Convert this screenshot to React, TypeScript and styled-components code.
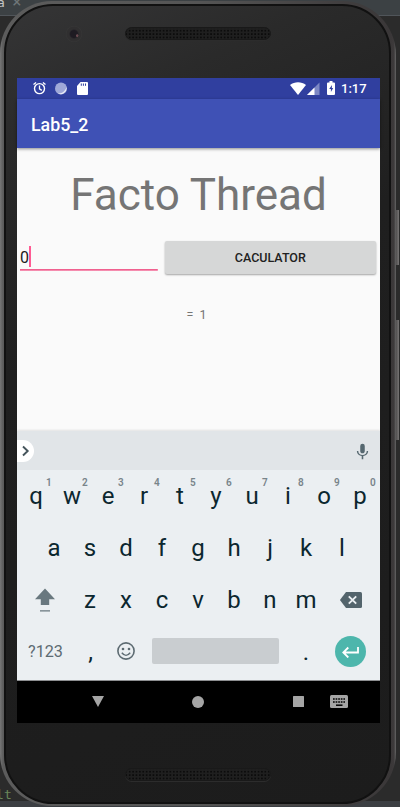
import React from "react";
import styled, { createGlobalStyle } from "styled-components";

const GlobalStyle = createGlobalStyle`
  * { box-sizing: border-box; }
  body { margin: 0; background: #2b2b2b; font-family: Roboto, "Liberation Sans", sans-serif; }
  svg { display: block; flex: none; }
`;

const Desktop = styled.main`
  position: relative;
  width: 400px;
  height: 807px;
  overflow: hidden;
  background: linear-gradient(#3c4144 0 15px, #50555a 15px 16px, #2b2b2b 16px 801px, #3c3f43 801px);
`;

const EditorText = styled.span<{ $x: number; $y: number; $color: string; $size: number }>`
  position: absolute;
  left: ${(p) => p.$x}px;
  top: ${(p) => p.$y}px;
  color: ${(p) => p.$color};
  font: ${(p) => p.$size}px/14px "DejaVu Sans Mono", monospace;
`;

const SideButton = styled.i<{ $y: number; $h: number }>`
  position: absolute;
  left: 396px;
  top: ${(p) => p.$y}px;
  width: 3px;
  height: ${(p) => p.$h}px;
  background: linear-gradient(90deg, #504e4e, #777575);
`;

const Shell = styled.section`
  position: relative;
  width: 396px;
  height: 805px;
  margin-top: 1px;
  padding: 3px 5px 2px 4px;
  border-radius: 52px 54px 54px 52px;
  background: linear-gradient(90deg, #777 0, #5c5c5c 3px, #555 50%, #3a3738 391px, #3d3a3b 394px, #666 396px);
`;

const Face = styled.div`
  display: flex;
  flex-direction: column;
  height: 800px;
  border: 2px solid #111;
  border-radius: 49px;
  background: linear-gradient(155deg, #353536 0, #2a2a2a 15%, #1f1f1f 38%, #1c1c1c 100%);
`;

const Bezel = styled.div<{ $h: number }>`
  position: relative;
  flex: none;
  height: ${(p) => p.$h}px;
`;

const Camera = styled.i`
  position: absolute;
  left: 60px;
  top: 20px;
  width: 16px;
  height: 16px;
  border-radius: 50%;
  background: radial-gradient(circle at 70% 60%, #6a4a50 0 1px, transparent 1.5px),
    radial-gradient(circle, #1e1b22 0 3.5px, #302f30 5px 7px, #383838 8px);
`;

const Speaker = styled.i<{ $top: number }>`
  position: absolute;
  left: 119px;
  top: ${(p) => p.$top}px;
  width: 146px;
  height: 13px;
  border-radius: 7px;
  border: 1px solid #191919;
  background: radial-gradient(circle, #0c0c0c 0 0.6px, transparent 1.2px) 2px 1px / 3.4px 3.4px, #1f1f1f;
  box-shadow: 0 1px 0 #2c2c2c;
`;

const Screen = styled.div`
  flex: none;
  width: 363px;
  height: 645px;
  margin-left: 11px;
  background: #fafafa;
`;

const StatusBar = styled.header`
  display: flex;
  align-items: center;
  height: 21px;
  padding: 0 14px 1px 16px;
  color: #fff;
  background: #303f9f;
`;

const Time = styled.span`
  width: 25px;
  margin-left: 6px;
  padding-top: 2px;
  font-size: 13px;
  line-height: 20px;
  font-weight: 500;
`;

const Push = styled.span`
  flex: 1;
`;

const Gap = styled.span<{ $w: number }>`
  flex: none;
  width: ${(p) => p.$w}px;
`;

const AppBar = styled.h1`
  position: relative;
  height: 49px;
  margin: 0;
  padding-left: 14px;
  color: #fff;
  font-size: 17.8px;
  line-height: 51px;
  font-weight: 500;
  background: #3f51b5;
  box-shadow: 0 1px 3px rgba(0, 0, 0, 0.45);
`;

const Content = styled.div`
  height: 283px;
  overflow: hidden;
`;

const Title = styled.h2`
  margin: 19px 0 0;
  color: #757575;
  font-size: 44px;
  line-height: 56px;
  font-weight: 400;
  text-align: center;
  white-space: nowrap;
`;

const Form = styled.div`
  display: flex;
  margin-top: 18px;
  padding: 0 4px 0 3px;
`;

const Field = styled.div`
  display: flex;
  width: 138px;
  height: 30px;
  padding-top: 5px;
  background: linear-gradient(#ee4a7f, #f7a3be) bottom / 100% 2px no-repeat;
  color: #212121;
  font-size: 16px;
  line-height: 23px;
`;

const Caret = styled.i`
  width: 2px;
  height: 21px;
  margin-left: -0.5px;
  background: #ff5b93;
`;

const CalcButton = styled.button`
  width: 212px;
  height: 33px;
  margin-left: 7px;
  padding: 1px 0 0;
  border: 0;
  border-radius: 2px;
  background: #d6d7d7;
  box-shadow: 0 1px 2px rgba(0, 0, 0, 0.35);
  color: #212121;
  font: 500 12.5px/32px Roboto, sans-serif;
`;

const Result = styled.p`
  margin: 33px 0 0;
  padding-right: 4px;
  color: #757575;
  font-size: 12.5px;
  line-height: 15px;
  text-align: center;
  word-spacing: 3px;
`;

const Suggestions = styled.div`
  display: flex;
  align-items: center;
  justify-content: space-between;
  height: 39px;
  padding: 1px 9px 0 0;
  background: #e1e5e8;
  box-shadow: 0 -1px 2px rgba(0, 0, 0, 0.1);
`;

const Expand = styled.span`
  display: flex;
  align-items: center;
  width: 17px;
  height: 22px;
  padding-left: 4px;
  border-radius: 0 11px 11px 0;
  background: #fff;
`;

const Keyboard = styled.div`
  height: 211px;
  background: #ebeff2;
  border-bottom: 1px solid #8c8e90;
`;

const KeyRow = styled.div<{ $indent: number }>`
  display: flex;
  height: 52px;
  padding-left: ${(p) => p.$indent}px;
`;

const Key = styled.span<{ $w?: number }>`
  position: relative;
  display: flex;
  justify-content: center;
  flex: none;
  width: ${(p) => p.$w ?? 36}px;
  color: #0b272f;
  font-size: 24px;
  line-height: 53px;
`;

const Hint = styled.sup`
  position: absolute;
  left: 28px;
  top: 7px;
  color: #78848a;
  font-size: 10px;
  line-height: 12px;
  font-weight: 600;
`;

const IconKey = styled(Key)`
  align-items: center;
`;

const EmojiKey = styled(IconKey)`
  padding-bottom: 2px;
`;

const ModeKey = styled(Key)`
  padding-left: 1px;
  color: #5d6b72;
  font-size: 16.2px;
  line-height: 52px;
`;

const PunctuationKey = styled(Key)`
  padding-left: 1px;
`;

const SpaceBar = styled.span`
  width: 127px;
  height: 26px;
  margin: 12px 8px 0 8.4px;
  border-radius: 2px;
  background: #c9cdd0;
`;

const Enter = styled.span`
  display: flex;
  align-items: center;
  justify-content: center;
  width: 31px;
  height: 31px;
  margin: 10px 0 0 11.6px;
  border-radius: 50%;
  background: #4db6ac;
`;

const NavBar = styled.nav`
  display: flex;
  align-items: center;
  height: 42px;
  padding-bottom: 1px;
  background: #000;
`;

const NavItem = styled.span<{ $w: number }>`
  display: flex;
  align-items: center;
  justify-content: center;
  flex: none;
  width: ${(p) => p.$w}px;
`;

const hints = "1234567890";

const letters = (row: string, numbered = false) =>
  row.split("").map((c, i) => (
    <Key key={c}>
      {c}
      {numbered && <Hint>{hints[i]}</Hint>}
    </Key>
  ));

const AlarmIcon = () => (
  <svg width="14" height="14" viewBox="0 0 14 14" fill="none" stroke="#fff">
    <circle cx="6.5" cy="7.6" r="5" strokeWidth="1.4" />
    <path d="M6.500 4.500v3.400l2.300 1.500M.5 3.600l2.600-2.200M12.500 3.600L9.900 1.400" strokeWidth="1.300" />
  </svg>
);

const SyncIcon = () => (
  <svg width="13" height="13" viewBox="0 0 13 13">
    <circle cx="6" cy="6.5" r="6" fill="#9fa8d8" />
    <path d="M11.500 5a6 6 0 0 1-9 6.300c4.200.6 7.600-1.700 9-6.300z" fill="#e8eaf6" />
  </svg>
);

const SdIcon = () => (
  <svg width="11" height="13" viewBox="0 0 11 13">
    <path d="M3.500 0H10a1 1 0 0 1 1 1v11a1 1 0 0 1-1 1H1a1 1 0 0 1-1-1V4z" fill="#fff" />
    <path d="M4.300 1.500v2.300M6.400 1.500v2.300M8.500 1.500v2.300" stroke="#303f9f" strokeWidth="1" />
  </svg>
);

const WifiIcon = () => (
  <svg width="16" height="13" viewBox="0 0 16 13">
    <path d="M0 3C4.500-.6 11.500-.6 16 3L8 13z" fill="#fff" />
  </svg>
);

const SignalIcon = () => (
  <svg width="13" height="13" viewBox="0 0 13 13">
    <path d="M0 13L12.500 .5v12.500z" fill="#7c87c4" />
    <path d="M0 13L7.500 5.500v7.500z" fill="#fff" />
  </svg>
);

const BatteryIcon = () => (
  <svg width="8" height="14" viewBox="0 0 8 14">
    <path d="M2.500 0h3v1.500H7a1 1 0 0 1 1 1V13a1 1 0 0 1-1 1H1a1 1 0 0 1-1-1V2.500a1 1 0 0 1 1-1h1.500z" fill="#fff" />
    <path d="M5 4L2.200 8h1.700v3L6.200 7H4.800z" fill="#303f9f" />
  </svg>
);

const MicIcon = () => (
  <svg width="17" height="17" viewBox="0 0 24 24" fill="#566870">
    <path d="M12 14.500c1.900 0 3.200-1.400 3.200-3.300V4.300a3.200 3.200 0 0 0-6.400 0v6.900c0 1.900 1.300 3.300 3.200 3.300z" />
    <path d="M18 11.200c0 3.400-2.900 5.600-6 5.600s-6-2.200-6-5.600H4c0 3.900 3.200 6.700 6.900 7.300V23h2.200v-4.500c3.700-.6 6.900-3.400 6.900-7.300z" />
  </svg>
);

const ShiftIcon = () => (
  <svg width="20" height="24" viewBox="0 0 20 24" fill="#69787f">
    <path d="M10 .5l10 10.700h-5.800V17H5.800v-5.800H0zM5 22.200h10v1.400H5z" />
  </svg>
);

const BackspaceIcon = () => (
  <svg width="22" height="16" viewBox="0 0 22 16">
    <path d="M6 0h14.500A1.500 1.500 0 0 1 22 1.500v13a1.500 1.500 0 0 1-1.500 1.500H6L.3 8.600a1 1 0 0 1 0-1.200z" fill="#53646c" />
    <path d="M8.800 4.300l7.400 7.400M16.200 4.300l-7.400 7.400" stroke="#ebeff2" strokeWidth="1.900" />
  </svg>
);

const SmileIcon = () => (
  <svg width="18" height="18" viewBox="0 0 18 18">
    <circle cx="9" cy="9" r="8.100" fill="none" stroke="#5d6b72" strokeWidth="1.600" />
    <circle cx="6" cy="7" r="1.300" fill="#5d6b72" />
    <circle cx="12" cy="7" r="1.300" fill="#5d6b72" />
    <path d="M4.800 10.700q4.200 5.300 8.400 0" fill="none" stroke="#5d6b72" strokeWidth="1.400" />
  </svg>
);

const EnterIcon = () => (
  <svg width="17" height="12" viewBox="0 0 17 12" fill="none" stroke="#fff" strokeWidth="1.800">
    <path d="M16 1v5.500H1.500M6.300 1.500l-5 5 5 5" />
  </svg>
);

const KeyboardIcon = () => (
  <svg width="18" height="13" viewBox="0 0 18 13">
    <rect width="18" height="13" rx="1.500" fill="#a5a5a5" />
    <path d="M3 4h12M3 7h12" stroke="#000" strokeWidth="1.700" strokeDasharray="1.700 .9" />
    <path d="M6 10.200h6.500" stroke="#000" strokeWidth="1.500" />
  </svg>
);

export default function App() {
  return (
    <>
      <GlobalStyle />
      <Desktop>
        <EditorText $x={-3} $y={-4} $color="#c4c4c4" $size={13}>a</EditorText>
        <EditorText $x={12} $y={-5} $color="#6f7678" $size={16}>×</EditorText>
        <EditorText $x={-4} $y={788} $color="#6a8759" $size={13}>l</EditorText>
        <EditorText $x={4} $y={788} $color="#6a8759" $size={13}>t</EditorText>
        <SideButton $y={210} $h={55} />
        <SideButton $y={320} $h={120} />
        <Shell>
          <Face>
            <Bezel $h={72}>
              <Camera />
              <Speaker $top={21} />
            </Bezel>
            <Screen>
              <StatusBar>
                <AlarmIcon />
                <Gap $w={8} />
                <SyncIcon />
                <Gap $w={9} />
                <SdIcon />
                <Push />
                <WifiIcon />
                <Gap $w={1} />
                <SignalIcon />
                <Gap $w={7} />
                <BatteryIcon />
                <Time>1:17</Time>
              </StatusBar>
              <AppBar>Lab5_2</AppBar>
              <Content>
                <Title>Facto Thread</Title>
                <Form>
                  <Field>
                    0<Caret />
                  </Field>
                  <CalcButton>CACULATOR</CalcButton>
                </Form>
                <Result>= 1</Result>
              </Content>
              <Suggestions>
                <Expand>
                  <svg width="9" height="12" viewBox="0 0 9 12" fill="none" stroke="#45545b" strokeWidth="1.900">
                    <path d="M2 1.500L6.700 6 2 10.500" />
                  </svg>
                </Expand>
                <MicIcon />
              </Suggestions>
              <Keyboard>
                <KeyRow $indent={1}>{letters("qwertyuiop", true)}</KeyRow>
                <KeyRow $indent={19}>{letters("asdfghjkl")}</KeyRow>
                <KeyRow $indent={1}>
                  <IconKey $w={54}><ShiftIcon /></IconKey>
                  {letters("zxcvbnm")}
                  <IconKey $w={54}><BackspaceIcon /></IconKey>
                </KeyRow>
                <KeyRow $indent={1}>
                  <ModeKey $w={54}>?123</ModeKey>
                  <PunctuationKey>,</PunctuationKey>
                  <EmojiKey><SmileIcon /></EmojiKey>
                  <SpaceBar />
                  <PunctuationKey>.</PunctuationKey>
                  <Enter><EnterIcon /></Enter>
                </KeyRow>
              </Keyboard>
              <NavBar>
                <NavItem $w={161}>
                  <svg width="12" height="11" viewBox="0 0 12 11"><path d="M0 0h12L6 11z" fill="#a5a5a5" /></svg>
                </NavItem>
                <NavItem $w={40}>
                  <svg width="12" height="12" viewBox="0 0 12 12"><circle cx="6" cy="6" r="6" fill="#a5a5a5" /></svg>
                </NavItem>
                <Gap $w={60} />
                <NavItem $w={40}>
                  <svg width="11" height="11" viewBox="0 0 11 11"><rect width="11" height="11" rx="0.5" fill="#a5a5a5" /></svg>
                </NavItem>
                <NavItem $w={42}>
                  <KeyboardIcon />
                </NavItem>
              </NavBar>
            </Screen>
            <Bezel $h={79}>
              <Speaker $top={45} />
            </Bezel>
          </Face>
        </Shell>
      </Desktop>
    </>
  );
}
